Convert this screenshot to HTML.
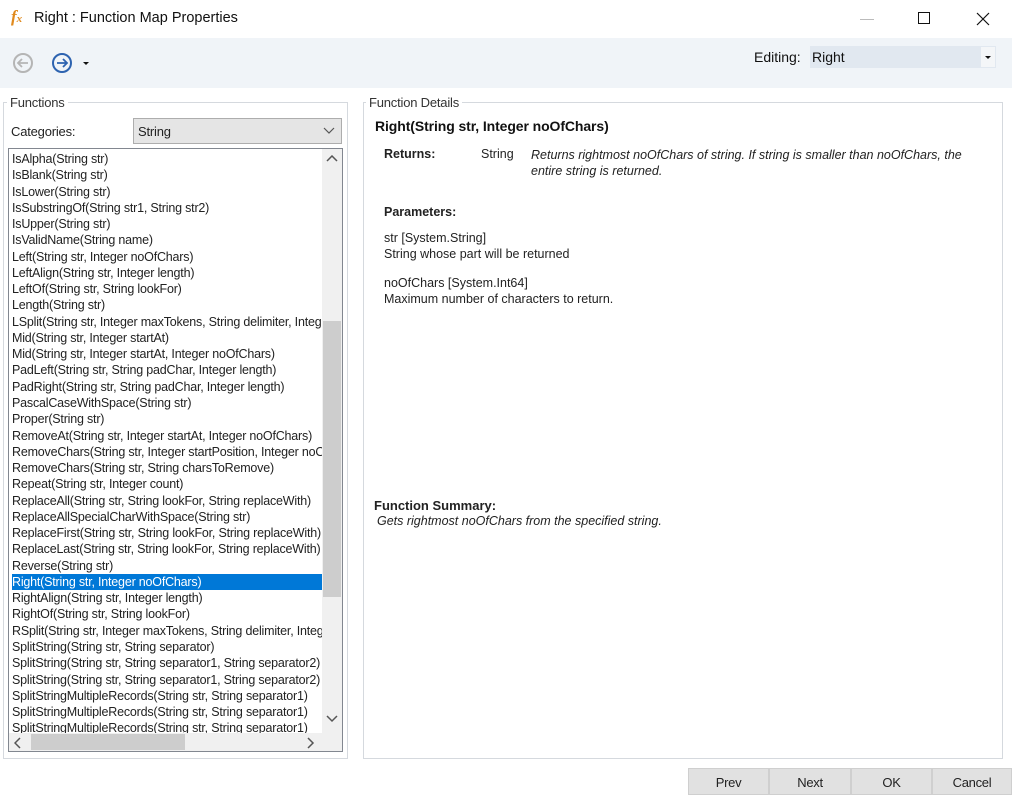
<!DOCTYPE html>
<html><head><meta charset="utf-8"><style>
*{margin:0;padding:0;box-sizing:border-box}
body{width:1012px;height:795px;position:relative;background:#fff;font-family:"Liberation Sans",sans-serif;color:#222;overflow:hidden}
.a{position:absolute}
.t{font-size:14px;color:#111}
.fs{border:1px solid #d5d9de}
.lg{background:#fff;font-size:13px;color:#333;padding:0 3px;letter-spacing:-0.2px}
.list{left:8px;top:148px;width:335px;height:604px;border:1px solid #828790;overflow:hidden}
.items{position:absolute;left:3px;top:2px;font-size:12.5px;letter-spacing:-0.2px;line-height:16.27px;color:#222;white-space:nowrap;width:310px;overflow:hidden}
.items div{height:16.27px}
.sel{background:#0078d7;color:#fff;margin-left:-3px;padding-left:3px;width:313px}
.btn{top:768px;height:27px;background:#e1e1e1;border:1px solid #cfcfcf;font-size:13px;text-align:center;line-height:27px;color:#222;letter-spacing:-0.3px}
.d{font-size:12.5px;letter-spacing:0;color:#222}
</style></head><body>
<div class="a" style="left:11px;top:7px;font-family:'Liberation Serif',serif;font-style:italic;font-weight:bold;color:#e08a1e;font-size:17px">f<span style="font-size:11px">x</span></div>
<div class="a t" style="left:34px;top:10px;font-size:14.5px">Right : Function Map Properties</div>
<div class="a" style="left:860px;top:19px;width:14px;height:1px;background:#bbb"></div>
<div class="a" style="left:918px;top:12px;width:12px;height:12px;border:1px solid #111"></div>
<svg class="a" style="left:976px;top:12px" width="14" height="14"><path d="M1 1L13 13M13 1L1 13" stroke="#111" stroke-width="1.2"/></svg>
<div class="a" style="left:0;top:38px;width:1012px;height:50px;background:#f0f4f8"></div>
<svg class="a" style="left:12px;top:52px" width="22" height="22"><circle cx="11" cy="11" r="9" fill="none" stroke="#b5b5b5" stroke-width="2"/><path d="M16 11H6M10 7L6 11L10 15" fill="none" stroke="#b5b5b5" stroke-width="1.8"/></svg>
<svg class="a" style="left:51px;top:52px" width="22" height="22"><circle cx="11" cy="11" r="9" fill="none" stroke="#2d63b0" stroke-width="2"/><path d="M6 11H16M12 7L16 11L12 15" fill="none" stroke="#2d63b0" stroke-width="1.8"/></svg>
<div class="a" style="left:83px;top:62px;border-left:3px solid transparent;border-right:3px solid transparent;border-top:3px solid #111"></div>
<div class="a t" style="left:754px;top:49px">Editing:</div>
<div class="a" style="left:810px;top:46px;width:186px;height:22px;background:#e1e8f0"></div>
<div class="a t" style="left:812px;top:49px">Right</div>
<div class="a" style="left:981px;top:47px;width:14px;height:20px;background:#f4f6f8"></div>
<div class="a" style="left:985px;top:56px;border-left:3px solid transparent;border-right:3px solid transparent;border-top:3px solid #111"></div>

<div class="a fs" style="left:3px;top:102px;width:345px;height:657px"></div>
<div class="a lg" style="left:7px;top:95px">Functions</div>
<div class="a d" style="left:11px;top:124px;font-size:13px;letter-spacing:-0.2px">Categories:</div>
<div class="a" style="left:133px;top:118px;width:209px;height:26px;background:#e5e5e5;border:1px solid #adadad"></div>
<div class="a d" style="left:138px;top:124px;font-size:13px;letter-spacing:-0.2px">String</div>
<svg class="a" style="left:323px;top:127px" width="12" height="8"><path d="M1 1L6 6L11 1" fill="none" stroke="#555" stroke-width="1.2"/></svg>
<div class="a list">
<div class="items">
<div>IsAlpha(String str)</div><div>IsBlank(String str)</div><div>IsLower(String str)</div><div>IsSubstringOf(String str1, String str2)</div><div>IsUpper(String str)</div><div>IsValidName(String name)</div><div>Left(String str, Integer noOfChars)</div><div>LeftAlign(String str, Integer length)</div><div>LeftOf(String str, String lookFor)</div><div>Length(String str)</div><div>LSplit(String str, Integer maxTokens, String delimiter, Integer</div><div>Mid(String str, Integer startAt)</div><div>Mid(String str, Integer startAt, Integer noOfChars)</div><div>PadLeft(String str, String padChar, Integer length)</div><div>PadRight(String str, String padChar, Integer length)</div><div>PascalCaseWithSpace(String str)</div><div>Proper(String str)</div><div>RemoveAt(String str, Integer startAt, Integer noOfChars)</div><div>RemoveChars(String str, Integer startPosition, Integer noOf</div><div>RemoveChars(String str, String charsToRemove)</div><div>Repeat(String str, Integer count)</div><div>ReplaceAll(String str, String lookFor, String replaceWith)</div><div>ReplaceAllSpecialCharWithSpace(String str)</div><div>ReplaceFirst(String str, String lookFor, String replaceWith)</div><div>ReplaceLast(String str, String lookFor, String replaceWith)</div><div>Reverse(String str)</div><div class="sel">Right(String str, Integer noOfChars)</div><div>RightAlign(String str, Integer length)</div><div>RightOf(String str, String lookFor)</div><div>RSplit(String str, Integer maxTokens, String delimiter, Integer</div><div>SplitString(String str, String separator)</div><div>SplitString(String str, String separator1, String separator2)</div><div>SplitString(String str, String separator1, String separator2)</div><div>SplitStringMultipleRecords(String str, String separator1)</div><div>SplitStringMultipleRecords(String str, String separator1)</div><div>SplitStringMultipleRecords(String str, String separator1)</div>
</div>
<div class="a" style="left:313px;top:0;width:20px;height:584px;background:#f0f0f0"></div>
<div class="a" style="left:314px;top:172px;width:18px;height:276px;background:#cdcdcd"></div>
<svg class="a" style="left:317px;top:6px" width="12" height="8"><path d="M1 6L6 1L11 6" fill="none" stroke="#555" stroke-width="1.5"/></svg>
<svg class="a" style="left:317px;top:566px" width="12" height="8"><path d="M1 1L6 6L11 1" fill="none" stroke="#555" stroke-width="1.5"/></svg>
<div class="a" style="left:0;top:584px;width:313px;height:18px;background:#f0f0f0"></div>
<div class="a" style="left:22px;top:585px;width:154px;height:16px;background:#cdcdcd"></div>
<svg class="a" style="left:5px;top:588px" width="8" height="12"><path d="M6 1L1 6L6 11" fill="none" stroke="#555" stroke-width="1.5"/></svg>
<svg class="a" style="left:298px;top:588px" width="8" height="12"><path d="M1 1L6 6L1 11" fill="none" stroke="#555" stroke-width="1.5"/></svg>
<div class="a" style="left:313px;top:584px;width:20px;height:18px;background:#f0f0f0"></div>
</div>

<div class="a fs" style="left:363px;top:102px;width:640px;height:657px"></div>
<div class="a lg" style="left:366px;top:95px">Function Details</div>
<div class="a" style="left:375px;top:118px;font-size:14px;font-weight:bold;color:#111;letter-spacing:-0.1px">Right(String str, Integer noOfChars)</div>
<div class="a d" style="left:384px;top:147px;font-weight:bold">Returns:</div>
<div class="a d" style="left:481px;top:147px">String</div>
<div class="a d" style="left:531px;top:147px;font-style:italic;width:455px;line-height:16px">Returns rightmost noOfChars of string. If string is smaller than noOfChars, the entire string is returned.</div>
<div class="a d" style="left:384px;top:205px;font-weight:bold">Parameters:</div>
<div class="a d" style="left:384px;top:231px;line-height:15.5px">str [System.String]<br>String whose part will be returned</div>
<div class="a d" style="left:384px;top:276px;line-height:15.5px">noOfChars [System.Int64]<br>Maximum number of characters to return.</div>
<div class="a d" style="left:374px;top:498px;font-weight:bold;font-size:13px">Function Summary:</div>
<div class="a d" style="left:377px;top:514px;font-style:italic">Gets rightmost noOfChars from the specified string.</div>

<div class="a btn" style="left:688px;width:81px">Prev</div>
<div class="a btn" style="left:769px;width:82px">Next</div>
<div class="a btn" style="left:851px;width:81px">OK</div>
<div class="a btn" style="left:932px;width:80px">Cancel</div>
</body></html>
